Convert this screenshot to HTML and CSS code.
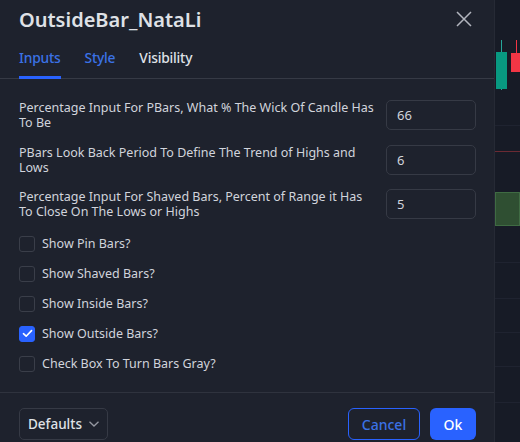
FILE: index.html
```html
<!DOCTYPE html>
<html>
<head>
<meta charset="utf-8">
<link rel="stylesheet" href="styles.css">
</head>
<body>
<div class="screen">
  <div class="dialog">
    <div class="header">
      <div class="title">OutsideBar_NataLi</div>
      <svg class="close" width="16" height="16" viewBox="0 0 16 16"><path d="M1 1L15 15M15 1L1 15" stroke="#b2b5be" stroke-width="1.5" fill="none"/></svg>
    </div>
    <div class="tabs">
      <div class="tab active">Inputs</div>
      <div class="tab blue">Style</div>
      <div class="tab">Visibility</div>
    </div>
    <div class="body">
      <div class="row">
        <div class="label">Percentage Input For PBars, What % The Wick Of Candle Has To Be</div>
        <div class="input">66</div>
      </div>
      <div class="row">
        <div class="label">PBars Look Back Period To Define The Trend of Highs and Lows</div>
        <div class="input">6</div>
      </div>
      <div class="row">
        <div class="label">Percentage Input For Shaved Bars, Percent of Range it Has To Close On The Lows or Highs</div>
        <div class="input">5</div>
      </div>
      <div class="checks">
        <div class="check"><span class="box"></span>Show Pin Bars?</div>
        <div class="check"><span class="box"></span>Show Shaved Bars?</div>
        <div class="check"><span class="box"></span>Show Inside Bars?</div>
        <div class="check"><span class="box on"><svg width="11" height="9" viewBox="0 0 12 10"><path d="M1.5 5.2L4.5 8L10.5 1.8" stroke="#fff" stroke-width="1.8" fill="none" stroke-linecap="round" stroke-linejoin="round"/></svg></span>Show Outside Bars?</div>
        <div class="check"><span class="box"></span>Check Box To Turn Bars Gray?</div>
      </div>
    </div>
    <div class="footer">
      <div class="defaults">Defaults <svg width="12" height="8" viewBox="0 0 12 8"><path d="M1.5 1.8L6 6L10.5 1.8" stroke="#9598a1" stroke-width="1.3" fill="none"/></svg></div>
      <div class="actions">
        <div class="btn cancel">Cancel</div>
        <div class="btn ok">Ok</div>
      </div>
    </div>
  </div>
  <div class="chart">
    <div class="grid g1"></div>
    <div class="grid g2"></div>
    <div class="grid g3"></div>
    <div class="grid g4"></div>
    <div class="grid g5"></div>
    <div class="grid g6"></div>
    <div class="wick green-w"></div>
    <div class="candle green"></div>
    <div class="wick red-w"></div>
    <div class="candle red"></div>
    <div class="hline"></div>
    <div class="zone"></div>
  </div>
</div>
</body>
</html>
```
FILE: styles.css
```css
* { box-sizing: border-box; }
html, body { margin: 0; padding: 0; }
body {
  width: 520px;
  height: 442px;
  overflow: hidden;
  background: #171b26;
  font-family: "Noto Sans", "Open Sans", sans-serif;
  color: #d1d4dc;
}
.screen { display: flex; width: 520px; height: 442px; }
.dialog {
  width: 495px;
  height: 442px;
  background: #1e222d;
  border-right: 1px solid #262a35;
  display: flex;
  flex-direction: column;
}
.header {
  height: 36px;
  padding: 2px 22px 0 19px;
  display: flex;
  align-items: center;
  justify-content: space-between;
}
.title {
  font-size: 20px;
  font-weight: 600;
  color: #dfe1e6;
}
.close { display: block; }
.tabs {
  height: 43px;
  display: flex;
  gap: 24px;
  padding: 0 19px;
  border-bottom: 1px solid #363a45;
}
.tab {
  font-size: 13.8px;
  font-weight: 500;
  letter-spacing: -0.2px;
  color: #dfe1e6;
  display: flex;
  align-items: center;
  padding-top: 3px;
  border-bottom: 3px solid transparent;
  margin-bottom: -1px;
}
.tab.blue { color: #3b72e6; }
.tab.active { color: #3b72e6; border-bottom-color: #2962ff; }
.body {
  flex: 1;
  padding: 21px 18px 0 19px;
}
.row {
  display: flex;
  justify-content: space-between;
  align-items: flex-start;
  height: 30px;
  margin-bottom: 14.5px;
}
.label {
  width: 355px;
  font-size: 12.5px;
  line-height: 15px;
  color: #d1d4dc;
}
.input {
  width: 90px;
  height: 30px;
  border: 1px solid #363a45;
  border-radius: 5px;
  font-size: 13px;
  padding: 0 10px;
  display: flex;
  align-items: center;
  color: #d1d4dc;
}
.checks {
  padding-top: 2px;
  display: flex;
  flex-direction: column;
  gap: 14px;
}
.check {
  display: flex;
  align-items: center;
  gap: 7px;
  height: 16px;
  font-size: 12.5px;
  color: #d1d4dc;
}
.box {
  width: 16px;
  height: 16px;
  border: 1px solid #3a3e49;
  border-radius: 3px;
  display: flex;
  align-items: center;
  justify-content: center;
}
.box.on { background: #2962ff; border-color: #2962ff; }
.footer {
  height: 50px;
  border-top: 1px solid #2f333e;
  padding: 15px 18px 0 19px;
  display: flex;
  justify-content: space-between;
  align-items: flex-start;
}
.defaults {
  width: 89px;
  height: 32px;
  border: 1px solid #363a45;
  border-radius: 5px;
  display: flex;
  align-items: center;
  justify-content: space-between;
  padding: 0 7px 0 8px;
  font-size: 13.5px;
  font-weight: 500;
  color: #dfe1e6;
}
.actions { display: flex; gap: 10px; }
.btn {
  height: 32px;
  border-radius: 6px;
  display: flex;
  align-items: center;
  justify-content: center;
  font-size: 14px;
  font-weight: 500;
}
.cancel { width: 72px; border: 1px solid #2962ff; color: #3b72e6; }
.ok { width: 46px; background: #2962ff; color: #fff; }
.chart { flex: 1; position: relative; overflow: hidden; }
.grid { position: absolute; left: 0; right: 0; height: 1px; background: #1f2330; }
.g1 { top: 125px; }
.g2 { top: 262px; }
.g3 { top: 298px; }
.g4 { top: 332px; }
.g5 { top: 366px; }
.g6 { top: 402px; }
.wick { position: absolute; width: 1px; }
.green-w { left: 6px; top: 40px; height: 50px; background: #26a69a; }
.red-w { left: 21px; top: 40px; height: 14px; background: #f23645; }
.candle { position: absolute; }
.green { left: 1px; top: 52px; width: 11px; height: 37px; background: #089981; }
.red { left: 16px; top: 53px; width: 10px; height: 19px; background: #f23645; }
.hline { position: absolute; left: 0; right: 0; top: 151px; height: 1px; background: #6b2a33; }
.zone { position: absolute; left: 0; right: 0; top: 192px; height: 34px; background: #2f4f32; border: 1px solid #3f6b43; }
```
